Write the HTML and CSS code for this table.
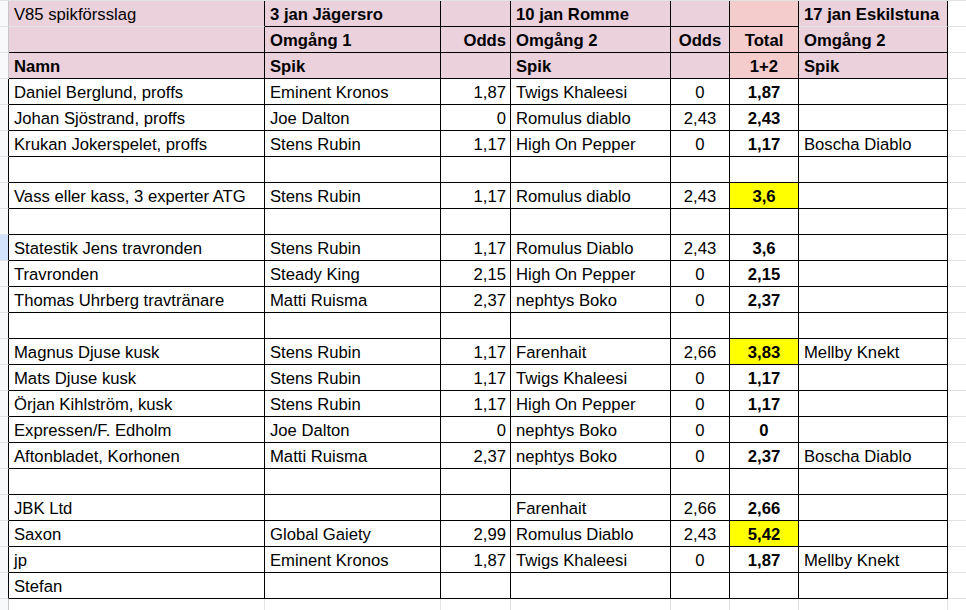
FILE: index.html
```html
<!DOCTYPE html>
<html lang="sv">
<head>
<meta charset="utf-8">
<title>V85 spikförsslag</title>
<link rel="stylesheet" href="styles.css">
</head>
<body>
<div class="sheet">
  <div class="row hd">
    <div class="c g"></div>
    <div class="c p nb">V85 spikförsslag</div>
    <div class="c p b">3 jan Jägersro</div>
    <div class="c p"></div>
    <div class="c p b">10 jan Romme</div>
    <div class="c p"></div>
    <div class="c t"></div>
    <div class="c p b nb">17 jan Eskilstuna</div>
    <div class="c f"></div>
  </div>
  <div class="row hd">
    <div class="c g"></div>
    <div class="c p"></div>
    <div class="c p b">Omgång 1</div>
    <div class="c p b r">Odds</div>
    <div class="c p b">Omgång 2</div>
    <div class="c p b ctr">Odds</div>
    <div class="c t b ctr">Total</div>
    <div class="c p b">Omgång 2</div>
    <div class="c f"></div>
  </div>
  <div class="row hd">
    <div class="c g"></div>
    <div class="c p b">Namn</div>
    <div class="c p b">Spik</div>
    <div class="c p"></div>
    <div class="c p b">Spik</div>
    <div class="c p"></div>
    <div class="c t b ctr">1+2</div>
    <div class="c p b">Spik</div>
    <div class="c f"></div>
  </div>

  <div class="row d">
    <div class="c g"></div>
    <div class="c">Daniel Berglund, proffs</div><div class="c">Eminent Kronos</div><div class="c r">1,87</div><div class="c">Twigs Khaleesi</div><div class="c ctr">0</div><div class="c ctr b">1,87</div><div class="c"></div>
    <div class="c f"></div>
  </div>
  <div class="row d">
    <div class="c g"></div>
    <div class="c">Johan Sjöstrand, proffs</div><div class="c">Joe Dalton</div><div class="c r">0</div><div class="c">Romulus diablo</div><div class="c ctr">2,43</div><div class="c ctr b">2,43</div><div class="c"></div>
    <div class="c f"></div>
  </div>
  <div class="row d">
    <div class="c g"></div>
    <div class="c">Krukan Jokerspelet, proffs</div><div class="c">Stens Rubin</div><div class="c r">1,17</div><div class="c">High On Pepper</div><div class="c ctr">0</div><div class="c ctr b">1,17</div><div class="c">Boscha Diablo</div>
    <div class="c f"></div>
  </div>
  <div class="row d">
    <div class="c g"></div>
    <div class="c"></div><div class="c"></div><div class="c"></div><div class="c"></div><div class="c"></div><div class="c"></div><div class="c"></div>
    <div class="c f"></div>
  </div>
  <div class="row d">
    <div class="c g"></div>
    <div class="c">Vass eller kass, 3 experter ATG</div><div class="c">Stens Rubin</div><div class="c r">1,17</div><div class="c">Romulus diablo</div><div class="c ctr">2,43</div><div class="c ctr b y">3,6</div><div class="c"></div>
    <div class="c f"></div>
  </div>
  <div class="row d">
    <div class="c g"></div>
    <div class="c"></div><div class="c"></div><div class="c"></div><div class="c"></div><div class="c"></div><div class="c"></div><div class="c"></div>
    <div class="c f"></div>
  </div>
  <div class="row d">
    <div class="c g sel"></div>
    <div class="c">Statestik Jens travronden</div><div class="c">Stens Rubin</div><div class="c r">1,17</div><div class="c">Romulus Diablo</div><div class="c ctr">2,43</div><div class="c ctr b">3,6</div><div class="c"></div>
    <div class="c f"></div>
  </div>
  <div class="row d">
    <div class="c g"></div>
    <div class="c">Travronden</div><div class="c">Steady King</div><div class="c r">2,15</div><div class="c">High On Pepper</div><div class="c ctr">0</div><div class="c ctr b">2,15</div><div class="c"></div>
    <div class="c f"></div>
  </div>
  <div class="row d">
    <div class="c g"></div>
    <div class="c">Thomas Uhrberg travtränare</div><div class="c">Matti Ruisma</div><div class="c r">2,37</div><div class="c">nephtys Boko</div><div class="c ctr">0</div><div class="c ctr b">2,37</div><div class="c"></div>
    <div class="c f"></div>
  </div>
  <div class="row d">
    <div class="c g"></div>
    <div class="c"></div><div class="c"></div><div class="c"></div><div class="c"></div><div class="c"></div><div class="c"></div><div class="c"></div>
    <div class="c f"></div>
  </div>
  <div class="row d">
    <div class="c g"></div>
    <div class="c">Magnus Djuse kusk</div><div class="c">Stens Rubin</div><div class="c r">1,17</div><div class="c">Farenhait</div><div class="c ctr">2,66</div><div class="c ctr b y">3,83</div><div class="c">Mellby Knekt</div>
    <div class="c f"></div>
  </div>
  <div class="row d">
    <div class="c g"></div>
    <div class="c">Mats Djuse kusk</div><div class="c">Stens Rubin</div><div class="c r">1,17</div><div class="c">Twigs Khaleesi</div><div class="c ctr">0</div><div class="c ctr b">1,17</div><div class="c"></div>
    <div class="c f"></div>
  </div>
  <div class="row d">
    <div class="c g"></div>
    <div class="c">Örjan Kihlström, kusk</div><div class="c">Stens Rubin</div><div class="c r">1,17</div><div class="c">High On Pepper</div><div class="c ctr">0</div><div class="c ctr b">1,17</div><div class="c"></div>
    <div class="c f"></div>
  </div>
  <div class="row d">
    <div class="c g"></div>
    <div class="c">Expressen/F. Edholm</div><div class="c">Joe Dalton</div><div class="c r">0</div><div class="c">nephtys Boko</div><div class="c ctr">0</div><div class="c ctr b">0</div><div class="c"></div>
    <div class="c f"></div>
  </div>
  <div class="row d">
    <div class="c g"></div>
    <div class="c">Aftonbladet, Korhonen</div><div class="c">Matti Ruisma</div><div class="c r">2,37</div><div class="c">nephtys Boko</div><div class="c ctr">0</div><div class="c ctr b">2,37</div><div class="c">Boscha Diablo</div>
    <div class="c f"></div>
  </div>
  <div class="row d">
    <div class="c g"></div>
    <div class="c"></div><div class="c"></div><div class="c"></div><div class="c"></div><div class="c"></div><div class="c"></div><div class="c"></div>
    <div class="c f"></div>
  </div>
  <div class="row d">
    <div class="c g"></div>
    <div class="c">JBK Ltd</div><div class="c"></div><div class="c r"></div><div class="c">Farenhait</div><div class="c ctr">2,66</div><div class="c ctr b">2,66</div><div class="c"></div>
    <div class="c f"></div>
  </div>
  <div class="row d">
    <div class="c g"></div>
    <div class="c">Saxon</div><div class="c">Global Gaiety</div><div class="c r">2,99</div><div class="c">Romulus Diablo</div><div class="c ctr">2,43</div><div class="c ctr b y">5,42</div><div class="c"></div>
    <div class="c f"></div>
  </div>
  <div class="row d">
    <div class="c g"></div>
    <div class="c">jp</div><div class="c">Eminent Kronos</div><div class="c r">1,87</div><div class="c">Twigs Khaleesi</div><div class="c ctr">0</div><div class="c ctr b">1,87</div><div class="c">Mellby Knekt</div>
    <div class="c f"></div>
  </div>
  <div class="row d">
    <div class="c g"></div>
    <div class="c">Stefan</div><div class="c"></div><div class="c"></div><div class="c"></div><div class="c"></div><div class="c"></div><div class="c"></div>
    <div class="c f"></div>
  </div>
  <div class="row">
    <div class="c g"></div>
    <div class="c"></div><div class="c"></div><div class="c"></div><div class="c"></div><div class="c"></div><div class="c"></div><div class="c"></div>
    <div class="c f"></div>
  </div>
</div>
</body>
</html>
```
FILE: styles.css
```css
html, body {
  margin: 0;
  padding: 0;
  background: #ffffff;
}

body {
  font-family: "Liberation Sans", Arial, sans-serif;
  font-size: 16.67px;
  color: #000000;
  overflow: hidden;
}

.sheet {
  display: flex;
  flex-direction: column;
  border-top: 1px solid #e2e3e3;
}

.row {
  display: grid;
  grid-template-columns: 9px 256px 176px 70px 160px 59px 69px 149px 18px;
  height: 26px;
  flex: none;
}

.c {
  box-sizing: border-box;
  display: flex;
  align-items: flex-end;
  justify-content: flex-start;
  padding: 0 4px 2px 5px;
  border-right: 1px solid #e2e3e3;
  border-bottom: 1px solid #e2e3e3;
  white-space: nowrap;
  overflow: hidden;
  line-height: 19px;
}

.g {
  padding: 0;
  background: #f8f9fa;
  border-right-color: #c7c7c7;
  border-bottom-color: #e2e3e3;
}

.g.sel {
  background: #d3e3fd;
}

.f {
  border-right: none;
  padding: 0;
}

.hd .p,
.hd .t,
.d .c {
  border-right-color: #000000;
  border-bottom-color: #000000;
}

.hd .g,
.hd .f,
.d .g,
.d .f {
  border-bottom-color: #e2e3e3;
}

.d .g {
  border-right-color: #000000;
}

.hd .p {
  background: #ead1dc;
}

.hd .t {
  background: #f4cccc;
}

.hd .nb {
  border-bottom-color: #e2e3e3;
}

.b {
  font-weight: bold;
}

.r {
  justify-content: flex-end;
  padding-right: 4px;
}

.ctr {
  justify-content: center;
  padding-left: 2px;
  padding-right: 2px;
}

.y {
  background: #ffff00;
}
```
